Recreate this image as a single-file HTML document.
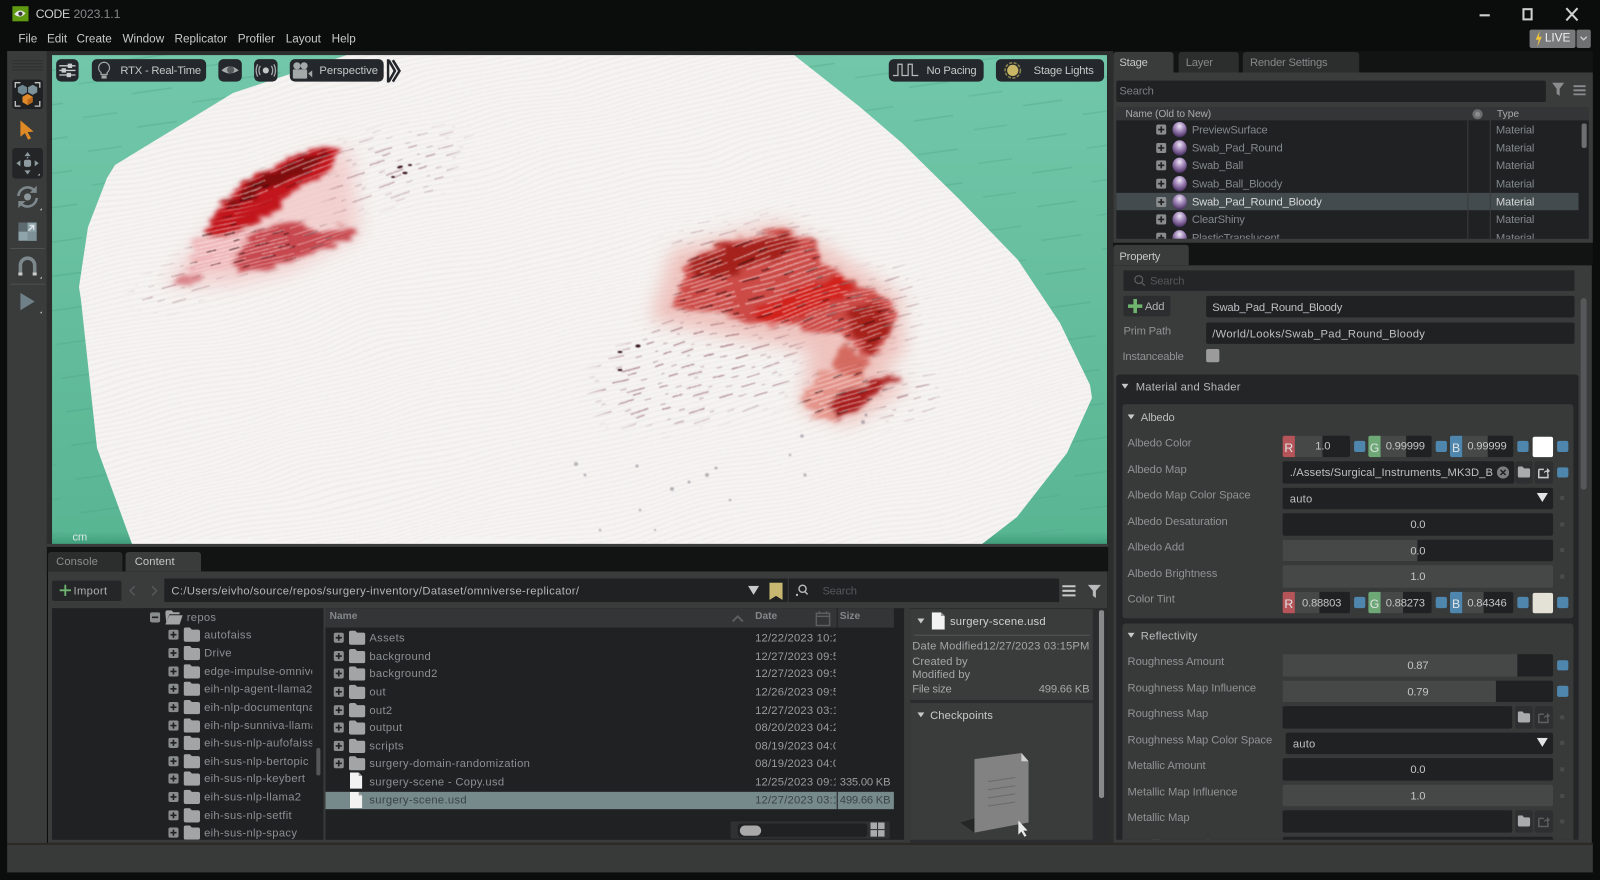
<!DOCTYPE html>
<html><head><meta charset="utf-8"><title>CODE 2023.1.1</title>
<style>
html,body{margin:0;padding:0;width:1600px;height:880px;overflow:hidden;background:#0b0c0c}
#v{position:absolute;left:0;top:0;z-index:0}
#u{position:absolute;left:0;top:0;width:1568px;height:862px;overflow:hidden;transform:scale(1.0204);transform-origin:0 0;z-index:1;filter:blur(.3px);font-family:"Liberation Sans",sans-serif}
#u div,#u svg{position:absolute}
.p{background:#3a3b3b}
.s{background:#2c2d2d}
.d{background:#1f2123}
.k{background:#121313}
.t{position:absolute;white-space:nowrap;font-size:11px;line-height:14px;letter-spacing:-.2px;color:#8f9394;transform:translateY(.6px)}
.m{color:#c8cbcb;top:31px;font-size:11.5px;letter-spacing:0}
.b{background:#24282c;border-radius:5px;top:58px;height:22px}
.w{color:#c4c8c8;top:62px}
.l{left:1105px;color:#8f9394;letter-spacing:-.08px}
.c{background:#4f86ad;width:11px;height:10.5px;border-radius:2px}
.o{background:#4a4b4b;width:4px;height:4px;left:1529px}
.f{background:#1f2123;border-radius:2px;left:1257px;width:265px;height:21.5px}
.g{background:#464747}
.v{text-align:center;color:#c4c6c6;left:1257px;width:265px}
.x{height:21.5px;border-radius:2px 0 0 2px;width:12px;color:#dfe3e3;text-align:center;font-size:12px;line-height:24px}
.n{color:#8b9091;letter-spacing:.3px}
.a{color:#9a9c9d;left:740px;width:79px;overflow:hidden;letter-spacing:.2px}
.y{color:#9a9c9d;left:823px}
.e{color:#83898b;left:1168px}
.i{color:#83898b;left:1466px}
.q{background:#2d2f30;border-radius:2px;width:17px;height:21.5px}
.tri{background:#c8caca;clip-path:polygon(0 0,100% 0,50% 100%)}
</style></head><body>

<svg id="v" width="1600" height="880" viewBox="0 0 1600 880">
<defs>
<clipPath id="vc"><rect x="52" y="55" width="1055" height="489"/></clipPath>
<clipPath id="gz"><polygon points="347,55 794,55 860,107 902,143 960,200 1018,260 1060,323 1090,385 1092,398 1067,453 1017,517 982,544 132,544 97,448 81,300 79,287 88,227 107,178 115,165 233,93"/></clipPath>
<pattern id="fib" width="200" height="4.6" patternUnits="userSpaceOnUse" patternTransform="rotate(-13)">
<line x1="0" y1="2" x2="200" y2="2" stroke="#e2dedb" stroke-width=".9"/></pattern>
<pattern id="tl" width="110" height="34" patternUnits="userSpaceOnUse" patternTransform="rotate(-8)">
<line x1="8" y1="9" x2="48" y2="9" stroke="#4fa688" stroke-width="1.6" opacity=".45"/>
<line x1="66" y1="26" x2="100" y2="26" stroke="#4fa688" stroke-width="1.4" opacity=".4"/></pattern>
<pattern id="stk" width="173" height="23" patternUnits="userSpaceOnUse" patternTransform="rotate(-16)">
<path d="M3 2.300h9M80 2.300h15M150 2.300h8M58 6.900h12M135 6.900h15M30 11.500h15M110 11.500h18M90 16.100h14M15 16.100h10M35 20.700h15M145 20.700h17" stroke="#7a3c4c" stroke-width="1.100" fill="none"/>
<path d="M40 2.300h4M120 2.300h4M20 6.900h6M100 6.900h4M8 11.500h3M75 11.500h8M160 11.500h6M50 16.100h4M140 16.100h6M2 20.700h5M66 20.700h6M115 20.700h6" stroke="#8a5c68" stroke-width="1" fill="none" opacity=".8"/></pattern>
<pattern id="wsk" width="211" height="21" patternUnits="userSpaceOnUse" patternTransform="rotate(-17)">
<path d="M0 2.100h70M90 2.100h70M175 2.100h30M20 6.300h55M95 6.300h90M0 10.500h34M48 10.500h60M130 10.500h75M10 14.700h80M105 14.700h40M160 14.700h45M30 18.900h65M110 18.900h90" stroke="#fff" stroke-width="1.100" fill="none"/></pattern>
<pattern id="dsk" width="137" height="16.800" patternUnits="userSpaceOnUse" patternTransform="rotate(-18)">
<path d="M5 2.100h10M60 2.100h6M30 6.300h14M100 6.300h8M12 10.500h6M80 10.500h16M50 14.700h12M120 14.700h10" stroke="#2e0a0e" stroke-width="1.300" fill="none"/></pattern>
<linearGradient id="tg" x1="0" y1="0" x2="0" y2="1"><stop offset="0" stop-color="#72c7aa"/><stop offset="1" stop-color="#58b592"/></linearGradient>
<linearGradient id="bt" x1="0" y1="0" x2="0" y2="1"><stop offset="0" stop-color="#2f8f6a" stop-opacity="0"/><stop offset="1" stop-color="#2f8f6a" stop-opacity=".6"/></linearGradient>
<filter id="wav" x="0" y="0" width="100%" height="100%"><feTurbulence type="fractalNoise" baseFrequency=".006 .012" numOctaves="2" seed="4" result="n"/><feDisplacementMap in="SourceGraphic" in2="n" scale="26" xChannelSelector="R" yChannelSelector="G"/><feGaussianBlur stdDeviation=".5"/></filter>
<filter id="fe" x="-20%" y="-20%" width="140%" height="140%"><feTurbulence type="fractalNoise" baseFrequency=".03 .18" numOctaves="2" seed="3" result="n"/><feDisplacementMap in="SourceGraphic" in2="n" scale="16" xChannelSelector="R" yChannelSelector="G"/><feGaussianBlur stdDeviation="2"/></filter>
<filter id="b8" x="-30%" y="-30%" width="160%" height="160%"><feGaussianBlur stdDeviation="9"/></filter>
<filter id="b5" x="-30%" y="-30%" width="160%" height="160%"><feGaussianBlur stdDeviation="5"/></filter>
<filter id="b1"><feGaussianBlur stdDeviation=".5"/></filter>
<mask id="m1" maskUnits="userSpaceOnUse" x="52" y="55" width="1055" height="489">
<g fill="#fff" filter="url(#b5)">
<polygon points="687,263 703,250 743,237 780,230 813,240 820,257 847,280 887,297 897,313 887,340 870,360 837,333 800,327 753,323 710,313 673,307"/>
<polygon points="800,400 820,373 853,367 900,380 873,400 837,423 810,413"/>
<polygon points="220,210 237,190 267,170 300,153 340,147 330,170 297,183 260,200 230,217"/>
<polygon points="233,260 250,233 290,223 350,232 317,250 267,267 240,273"/>
<polygon points="195,235 235,215 260,240 235,265 190,275"/>
</g></mask>
<mask id="m2" maskUnits="userSpaceOnUse" x="52" y="55" width="1055" height="489">
<g fill="#fff" filter="url(#b8)">
<polygon points="590,375 680,310 800,335 790,395 680,425 600,420" opacity=".9"/>
<polygon points="660,240 700,225 800,215 845,250 800,235 700,260" opacity=".6"/>
<polygon points="880,380 940,375 930,410 880,425" opacity=".8"/>
<polygon points="850,275 900,265 925,300 905,350 880,340" opacity=".6"/>
<polygon points="130,295 210,240 220,290 150,310" opacity=".7"/>
<polygon points="340,140 470,130 440,190 330,215" opacity=".7"/>
</g></mask>
</defs>
<g clip-path="url(#vc)">
<rect x="52" y="55" width="1055" height="489" fill="url(#tg)"/>
<rect x="52" y="55" width="1055" height="489" fill="url(#tl)"/>
<rect x="52" y="532" width="1055" height="12" fill="url(#bt)"/>
<polygon points="347,55 794,55 860,107 902,143 960,200 1018,260 1060,323 1090,385 1092,398 1067,453 1017,517 982,544 132,544 97,448 81,300 79,287 88,227 107,178 115,165 233,93" fill="#f6f4f2"/>
<g clip-path="url(#gz)">
<g opacity=".55"><rect x="52" y="55" width="1055" height="489" fill="url(#fib)" filter="url(#wav)"/></g>

<!-- pale halos -->
<g filter="url(#b8)">
<polygon points="165,285 220,215 300,160 350,148 360,235 290,272 230,285" fill="#f0b4b4" opacity=".55"/>
<polygon points="650,320 672,250 780,222 830,250 900,295 905,350 880,375 910,385 850,425 800,410 810,350 750,340" fill="#eba39c" opacity=".6"/>
</g>
<g mask="url(#m2)" opacity=".7"><rect x="52" y="55" width="1055" height="489" fill="url(#stk)" filter="url(#wav)"/></g>

<!-- stains with feathered edges -->
<g filter="url(#fe)">
<polygon points="195,238 235,218 260,240 235,265 190,275" fill="#efb4b6" opacity=".85"/>
<polygon points="233,260 250,233 290,223 360,232 317,252 267,270 240,275" fill="#c74a50"/>
<polygon points="170,282 188,274 205,275 192,284" fill="#d9858a"/>
<polygon points="205,232 220,207 237,190 267,170 300,153 340,147 330,170 297,190 270,215 230,235" fill="#c2191f"/>
<polygon points="225,207 245,190 275,170 305,158 330,152 318,166 290,178 260,192 235,208" fill="#7f0b10"/>
<polygon points="687,263 703,250 743,237 780,230 813,240 820,257 847,280 887,297 897,313 887,340 870,360 837,333 800,327 753,323 710,313 673,307" fill="#cc4c46"/>
<polygon points="800,400 820,373 853,367 870,385 837,423 810,413" fill="#e4948a"/>
<polygon points="845,345 870,362 855,380 830,365" fill="#d46a60"/>
<polygon points="688,262 715,250 750,240 785,232 800,245 770,262 730,275 695,280" fill="#a5211f"/>
<polygon points="745,315 790,290 840,275 855,288 820,310 775,325" fill="#d2201c"/>
<polygon points="845,310 880,300 892,330 870,355 853,335" fill="#a8241f"/>
<polygon points="828,405 850,386 900,378 872,398 840,420" fill="#a81c1c"/>
</g>
<g mask="url(#m1)" opacity=".7"><rect x="52" y="55" width="1055" height="489" fill="url(#dsk)" filter="url(#wav)"/></g>
<g mask="url(#m1)" opacity=".5"><rect x="52" y="55" width="1055" height="489" fill="url(#wsk)" filter="url(#wav)"/></g>
<!-- speckles -->
<g fill="#3d1a22" filter="url(#b1)">
<ellipse cx="400" cy="167" rx="3" ry="1.300" transform="rotate(-15 400 167)"/><ellipse cx="405" cy="173" rx="2.500" ry="1.200"/><ellipse cx="393" cy="177" rx="1.800" ry="1"/><ellipse cx="410" cy="165" rx="2" ry="1"/>
<ellipse cx="638" cy="346" rx="2.600" ry="1.600"/><ellipse cx="620" cy="352" rx="2.400" ry="1.100"/><ellipse cx="620" cy="370" rx="2.400" ry="1.100"/>
</g>
<g fill="#6c6a78" opacity=".45" filter="url(#b1)">
<circle cx="576" cy="464" r="2"/><circle cx="637" cy="466" r="1.600"/><circle cx="672" cy="489" r="2"/><circle cx="689" cy="482" r="1.500"/><circle cx="707" cy="475" r="2"/><circle cx="716" cy="468" r="1.500"/><circle cx="802" cy="436" r="1.800"/><circle cx="805" cy="475" r="1.600"/><circle cx="863" cy="422" r="2"/><circle cx="866" cy="415" r="1.500"/><circle cx="585" cy="475" r="1.500"/><circle cx="640" cy="510" r="1.300"/><circle cx="730" cy="500" r="1.300"/><circle cx="790" cy="455" r="1.300"/><circle cx="600" cy="530" r="1.300"/><circle cx="655" cy="530" r="1.100"/>
</g>
</g>
</g>
</svg>

<svg width="0" height="0" style="position:absolute"><defs>
<symbol id="pl" viewBox="0 0 10 10"><rect width="10" height="10" rx="2" fill="#8a8d8e"/><path d="M5 2v6M2 5h6" stroke="#1f2123" stroke-width="1.6"/></symbol>
<symbol id="mi" viewBox="0 0 10 10"><rect width="10" height="10" rx="2" fill="#8a8d8e"/><path d="M2 5h6" stroke="#1f2123" stroke-width="1.6"/></symbol>
<symbol id="fo" viewBox="0 0 16 14"><path d="M0 2q0-2 2-2h4l2 2h6q2 0 2 2v8q0 2-2 2H2q-2 0-2-2z" fill="#a2a4a5"/></symbol>
<symbol id="fg" viewBox="0 0 12 11"><path d="M0 2q0-2 1.500-2h3l1.500 2h4.500q1.500 0 1.500 1.500v6q0 1.500-1.500 1.500h-9q-1.500 0-1.500-1.500z" fill="#a9abac"/></symbol>
<symbol id="pg" viewBox="0 0 12 16"><path d="M0 0h8.500l3.500 3.500v12.500h-12z" fill="#f2f2f2"/><path d="M8.500 0l3.500 3.500h-3.500z" fill="#9a9a9a"/></symbol>
<symbol id="sh" viewBox="0 0 12 12"><path d="M1 3h5M1 3v8h9V7" fill="none" stroke="#c8caca" stroke-width="1.500"/><path d="M6 7q0-3 3-3V1.500l3 3-3 3V5.500q-2 0-3 1.500z" fill="#c8caca"/></symbol>
<symbol id="sd" viewBox="0 0 12 12"><path d="M1 3h5M1 3v8h9V7" fill="none" stroke="#5c5e5f" stroke-width="1.500"/><path d="M6 7q0-3 3-3V1.500l3 3-3 3V5.500q-2 0-3 1.500z" fill="#5c5e5f"/></symbol>
<radialGradient id="sg" cx=".5" cy=".28" r=".72"><stop offset="0" stop-color="#efe9f4"/><stop offset=".42" stop-color="#a98fc0"/><stop offset="1" stop-color="#452c5e"/></radialGradient>
<symbol id="ball" viewBox="0 0 16 16"><ellipse cx="8" cy="8" rx="7" ry="7.500" fill="url(#sg)"/></symbol>
</defs></svg>

<div id="u">
<!-- title bar -->
<svg style="left:12px;top:6px" width="16" height="15" viewBox="0 0 16 15"><rect width="16" height="15" fill="#5f9a10"/><path d="M2 8q5-7 11-1-5 6-11 1z" fill="#e8e8e8"/><circle cx="8" cy="7.500" r="2" fill="#3a3a3a"/></svg>
<span class="t" style="left:35px;top:6px;color:#cdd0d0;font-size:12px;letter-spacing:-.3px">CODE</span>
<span class="t" style="left:72px;top:6px;color:#85888a;font-size:12px;letter-spacing:-.1px">2023.1.1</span>
<span class="t m" style="left:18px">File</span>
<span class="t m" style="left:46px">Edit</span>
<span class="t m" style="left:75px">Create</span>
<span class="t m" style="left:120px">Window</span>
<span class="t m" style="left:171px">Replicator</span>
<span class="t m" style="left:233px">Profiler</span>
<span class="t m" style="left:280px">Layout</span>
<span class="t m" style="left:325px">Help</span>
<svg style="left:1445px;top:5px" width="110" height="18" viewBox="0 0 110 18" fill="none" stroke="#cfd1d1" stroke-width="2"><path d="M5 10h10"/><rect x="48" y="4" width="8" height="10"/><path d="M90 3l11 12M101 3l-11 12"/></svg>
<div style="left:1499px;top:29px;width:45px;height:18px;background:#797a7b;border-radius:2px"></div>
<svg style="left:1504px;top:30px" width="8" height="16" viewBox="0 0 8 16"><path d="M5 0L1 9h3l-1.500 7L7 6H4z" fill="#f0c53a"/></svg>
<span class="t" style="left:1514px;top:30px;color:#eee;font-size:11.5px;letter-spacing:0">LIVE</span>
<div style="left:1545px;top:29px;width:14px;height:18px;background:#6e6f70;border-radius:2px"></div>
<svg style="left:1548px;top:35px" width="8" height="6" viewBox="0 0 8 6"><path d="M1 1l3 3 3-3" fill="none" stroke="#d0d0d0" stroke-width="1.300"/></svg>

<!-- frames -->
<div class="p" style="left:7px;top:50px;width:39px;height:777px"></div>
<div class="s" style="left:46px;top:50px;width:5px;height:487px"></div>
<div class="s" style="left:46px;top:50px;width:1045px;height:4px"></div>
<div class="s" style="left:1085px;top:50px;width:6px;height:777px"></div>
<div class="p" style="left:46px;top:533px;width:1040px;height:3px"></div>
<div class="k" style="left:46px;top:536px;width:1040px;height:24px"></div>
<div class="s" style="left:47px;top:541px;width:73px;height:19px;border-radius:3px 3px 0 0"></div>
<div class="p" style="left:123px;top:541px;width:74px;height:19px;border-radius:3px 3px 0 0"></div>
<span class="t" style="left:55px;top:543px;color:#8a8e8f;font-size:11px;letter-spacing:.1px">Console</span>
<span class="t" style="left:132px;top:543px;color:#c4c8c8;font-size:11px;letter-spacing:.1px">Content</span>
<div class="p" style="left:47px;top:560px;width:1038px;height:266px"></div>
<div style="left:7px;top:826px;width:1554px;height:2px;background:#2f2a26"></div>
<div style="left:7px;top:828px;width:1554px;height:27px;background:#383939"></div>

<!-- left toolbar -->
<svg style="left:12px;top:58px" width="30" height="12" viewBox="0 0 30 12" stroke="#2e2f2f" stroke-width="1"><path d="M0 1.500h30M0 4.500h30M0 7.500h30M0 10.500h30"/></svg>
<div class="d" style="left:12px;top:78px;width:30px;height:29px;border-radius:3px"></div>
<svg style="left:12px;top:78px" width="30" height="29" viewBox="0 0 30 29"><path d="M3 8V3h5M22 3h5v5M3 21v5h5M22 26h5v-5" fill="none" stroke="#c4c6c6" stroke-width="1.300"/><path d="M10 5l4.500 2.500v5L10 15l-4.500-2.500v-5z" fill="#6f8590"/><path d="M20 5l4.500 2.500v5L20 15l-4.500-2.500v-5z" fill="#7e929c"/><path d="M15 14l5 2.800v5.400L15 25l-5-2.800v-5.400z" fill="#e08a2a"/><path d="M15 19.600l5-2.800v5.400L15 25z" fill="#b9681a"/></svg>
<svg style="left:19px;top:117px" width="16" height="20" viewBox="0 0 16 20"><path d="M1 1l13 11-6 .5 3.500 6-3 1.500-3-6.500L1 17z" fill="#e08a25"/></svg>
<div style="left:12px;top:145px;width:30px;height:30px;border-radius:3px;background:#232526"></div>
<svg style="left:12px;top:145px" width="30" height="30" viewBox="0 0 30 30" fill="#8e9ba0"><rect x="11.500" y="11.500" width="7" height="7" rx="2"/><path d="M15 4l3 4h-6zM15 26l3-4h-6zM4 15l4-3v6zM26 15l-4-3v6z"/><circle cx="15" cy="9.500" r=".8"/><path d="M25 27h2v-2l-2 2z" fill="#ccc"/></svg>
<svg style="left:12px;top:178px" width="30" height="30" viewBox="0 0 30 30"><path d="M6 14a9 9 0 0 1 16-5M24 16a9 9 0 0 1-16 5" fill="none" stroke="#7d888c" stroke-width="2.500"/><path d="M24 4v7h-7zM6 26v-7h7z" fill="#7d888c"/><circle cx="15" cy="15" r="3.500" fill="#8c969a"/><path d="M27 28h2v-2z" fill="#ccc"/></svg>
<svg style="left:18px;top:218px" width="18" height="18" viewBox="0 0 18 18"><rect width="18" height="18" fill="#8ea3aa"/><rect width="9" height="9" fill="#5d6a6f"/><rect x="9" y="9" width="9" height="9" fill="#7e9198"/><path d="M10 8l5-5M11 3h4v4" stroke="#e0e6e8" stroke-width="1.400" fill="none"/></svg>
<div style="left:10px;top:243px;width:34px;height:1px;background:#505151"></div>
<svg style="left:12px;top:250px" width="30" height="24" viewBox="0 0 30 24"><path d="M8 17v-7a7 7 0 0 1 14 0v7" fill="none" stroke="#7d888c" stroke-width="3.500"/><path d="M6 17h4v3H6zM20 17h4v3h-4z" fill="#c8cccd"/><path d="M27 23h2v-2z" fill="#ccc"/></svg>
<div style="left:10px;top:278px;width:34px;height:1px;background:#505151"></div>
<svg style="left:12px;top:286px" width="30" height="22" viewBox="0 0 30 22"><path d="M8 1l14 8.500L8 18z" fill="#6f8088"/><path d="M27 21h2v-2z" fill="#ccc"/></svg>

<!-- viewport buttons -->
<div class="b" style="left:55px;width:22px"></div>
<svg style="left:58px;top:62px" width="16" height="14" viewBox="0 0 16 14" stroke="#c9cdcd" stroke-width="1.300" fill="#c9cdcd"><path d="M0 2.500h16M0 7h16M0 11.500h16"/><rect x="9" y="1" width="3" height="3"/><rect x="3" y="5.500" width="3" height="3"/><rect x="8" y="10" width="3" height="3"/></svg>
<div class="b" style="left:90px;width:112px"></div>
<svg style="left:95px;top:60px" width="14" height="18" viewBox="0 0 14 18"><path d="M7 1a5.500 5.500 0 0 0-3 10v2h6v-2a5.500 5.500 0 0 0-3-10z" fill="none" stroke="#a3a8a9" stroke-width="1.200"/><rect x="4.500" y="14" width="5" height="3" fill="#a3a8a9"/></svg>
<span class="t w" style="left:118px">RTX - Real-Time</span>
<div class="b" style="left:214px;width:23px"></div>
<svg style="left:216px;top:62px" width="19" height="14" viewBox="0 0 19 14"><path d="M1 7q8-8 17 0-9 6-17 0z" fill="#a3a8a9"/><circle cx="10" cy="6.500" r="3.500" fill="#565a5c"/></svg>
<div class="b" style="left:249px;width:23px"></div>
<svg style="left:250px;top:62px" width="21" height="14" viewBox="0 0 21 14" fill="none" stroke="#a3a8a9" stroke-width="1.300"><circle cx="10.500" cy="7" r="3" fill="#c2c6c6" stroke="none"/><path d="M5 2.500q-2.500 4.500 0 9M16 2.500q2.500 4.500 0 9M2.500 1q-3 6 0 12M18.500 1q3 6 0 12"/></svg>
<div class="b" style="left:284px;width:92px"></div>
<svg style="left:286px;top:60px" width="21" height="18" viewBox="0 0 21 18" fill="#a3a8a9"><circle cx="5" cy="4.500" r="3.500"/><circle cx="12" cy="4.500" r="3.500"/><rect x="1" y="8" width="14" height="9" rx="1"/><path d="M16 12l4-3v7z"/></svg>
<span class="t w" style="left:313px;letter-spacing:0">Perspective</span>
<svg style="left:379px;top:58px" width="15" height="23" viewBox="0 0 15 23"><rect width="2.500" height="23" fill="#23272b"/><path d="M2 1l6 10.500-6 10.500M6 1l6.500 10.500-6.500 10.500" fill="none" stroke="#23272b" stroke-width="2.500"/></svg>
<div class="b" style="left:871px;width:93px"></div>
<svg style="left:875px;top:62px" width="26" height="13" viewBox="0 0 26 13" fill="none" stroke="#b8bcbc" stroke-width="1.200"><path d="M0 12h5V1h4v11h6V1h4v11h6"/></svg>
<span class="t w" style="left:908px">No Pacing</span>
<div class="b" style="left:976px;width:106px"></div>
<svg style="left:984px;top:60px" width="17" height="18" viewBox="0 0 17 18"><circle cx="8.500" cy="9" r="5.500" fill="#c9b765"/><circle cx="8.500" cy="9" r="7.500" fill="none" stroke="#8b8450" stroke-width="1.500" stroke-dasharray="3 1.500"/></svg>
<span class="t w" style="left:1013px">Stage Lights</span>
<span class="t" style="left:71px;top:519px;color:#d8e8e2;font-size:11px">cm</span>

<!-- content bar -->
<div style="left:51px;top:568.500px;width:68px;height:20.500px;background:#242628;border-radius:2px"></div>
<svg style="left:58px;top:572px" width="12" height="13" viewBox="0 0 12 13"><path d="M6 1v11M0.500 6.500h11" stroke="#6fb56f" stroke-width="1.800"/></svg>
<span class="t" style="left:72px;top:572px;color:#adb0b1;letter-spacing:.35px">Import</span>
<svg style="left:126px;top:573px" width="30" height="12" viewBox="0 0 30 12" fill="none" stroke="#55585a" stroke-width="1.500"><path d="M6 1.500L1.500 6 6 10.500M23 1.500L27.500 6 23 10.500"/></svg>
<div class="d" style="left:161px;top:566.500px;width:611px;height:23.500px"></div>
<span class="t" style="left:168px;top:572px;color:#b5b8b9;letter-spacing:.35px">C:/Users/eivho/source/repos/surgery-inventory/Dataset/omniverse-replicator/</span>
<div class="tri" style="left:733px;top:574px;width:11px;height:9px"></div>
<svg style="left:754px;top:570.500px" width="13" height="17" viewBox="0 0 13 17"><path d="M0 0h13v17l-6.500-4L0 17z" fill="#c8b770"/></svg>
<div class="d" style="left:773px;top:566.500px;width:264.500px;height:23.500px"></div>
<svg style="left:780px;top:572px" width="12" height="13" viewBox="0 0 12 13"><circle cx="6.500" cy="5" r="3.500" fill="none" stroke="#b8bbbc" stroke-width="1.400"/><path d="M9 8l2.500 2.500" stroke="#b8bbbc" stroke-width="1.400"/><rect x="0" y="10" width="2" height="2" fill="#b8bbbc"/></svg>
<span class="t" style="left:806px;top:572px;color:#55585a">Search</span>
<svg style="left:1041px;top:573px" width="13" height="12" viewBox="0 0 13 12" stroke="#c8caca" stroke-width="2"><path d="M0 1.500h13M0 6h13M0 10.500h13"/></svg>
<svg style="left:1066px;top:573px" width="13" height="13" viewBox="0 0 13 13"><path d="M0 0h13L8 6v7L5 11V6z" fill="#b8bbbc"/></svg>

<!-- folder tree -->
<div class="d" style="left:51px;top:596px;width:266px;height:227px"></div>
<div style="left:51px;top:596px;width:255px;height:227px;overflow:hidden">
<svg style="left:96px;top:4px" width="10" height="10"><use href="#mi"/></svg>
<svg style="left:111px;top:2px" width="17" height="14" viewBox="0 0 17 14"><path d="M0 3q0-3 2-3h4l2 2h6v2H4L1 12z" fill="#a2a4a5"/><path d="M4 5h13l-3 9H0z" fill="#a2a4a5"/></svg>
<span class="t n" style="left:132px;top:2px">repos</span>
<svg style="left:114px;top:21px" width="10" height="10"><use href="#pl"/></svg><svg style="left:129px;top:19px" width="16" height="14"><use href="#fo"/></svg><span class="t n" style="left:149px;top:19px">autofaiss</span>
<svg style="left:114px;top:39px" width="10" height="10"><use href="#pl"/></svg><svg style="left:129px;top:37px" width="16" height="14"><use href="#fo"/></svg><span class="t n" style="left:149px;top:37px">Drive</span>
<svg style="left:114px;top:57px" width="10" height="10"><use href="#pl"/></svg><svg style="left:129px;top:55px" width="16" height="14"><use href="#fo"/></svg><span class="t n" style="left:149px;top:55px">edge-impulse-omniverse</span>
<svg style="left:114px;top:74px" width="10" height="10"><use href="#pl"/></svg><svg style="left:129px;top:72px" width="16" height="14"><use href="#fo"/></svg><span class="t n" style="left:149px;top:72px">eih-nlp-agent-llama2</span>
<svg style="left:114px;top:92px" width="10" height="10"><use href="#pl"/></svg><svg style="left:129px;top:90px" width="16" height="14"><use href="#fo"/></svg><span class="t n" style="left:149px;top:90px">eih-nlp-documentqna</span>
<svg style="left:114px;top:110px" width="10" height="10"><use href="#pl"/></svg><svg style="left:129px;top:108px" width="16" height="14"><use href="#fo"/></svg><span class="t n" style="left:149px;top:108px">eih-nlp-sunniva-llama2</span>
<svg style="left:114px;top:127px" width="10" height="10"><use href="#pl"/></svg><svg style="left:129px;top:125px" width="16" height="14"><use href="#fo"/></svg><span class="t n" style="left:149px;top:125px">eih-sus-nlp-aufofaiss</span>
<svg style="left:114px;top:145px" width="10" height="10"><use href="#pl"/></svg><svg style="left:129px;top:143px" width="16" height="14"><use href="#fo"/></svg><span class="t n" style="left:149px;top:143px">eih-sus-nlp-bertopic</span>
<svg style="left:114px;top:162px" width="10" height="10"><use href="#pl"/></svg><svg style="left:129px;top:160px" width="16" height="14"><use href="#fo"/></svg><span class="t n" style="left:149px;top:160px">eih-sus-nlp-keybert</span>
<svg style="left:114px;top:180px" width="10" height="10"><use href="#pl"/></svg><svg style="left:129px;top:178px" width="16" height="14"><use href="#fo"/></svg><span class="t n" style="left:149px;top:178px">eih-sus-nlp-llama2</span>
<svg style="left:114px;top:198px" width="10" height="10"><use href="#pl"/></svg><svg style="left:129px;top:196px" width="16" height="14"><use href="#fo"/></svg><span class="t n" style="left:149px;top:196px">eih-sus-nlp-setfit</span>
<svg style="left:114px;top:215px" width="10" height="10"><use href="#pl"/></svg><svg style="left:129px;top:213px" width="16" height="14"><use href="#fo"/></svg><span class="t n" style="left:149px;top:213px">eih-sus-nlp-spacy</span>
</div>
<div style="left:310px;top:733px;width:4px;height:27px;background:#555758;border-radius:2px"></div>

<!-- file list -->
<div class="d" style="left:319px;top:596px;width:567px;height:227px"></div>
<div style="left:319px;top:596px;width:557px;height:19px;background:#333536"></div>
<span class="t" style="left:323px;top:597px;color:#84888a;font-size:10px;font-weight:bold;letter-spacing:0">Name</span>
<svg style="left:717px;top:602px" width="12" height="8" viewBox="0 0 12 8"><path d="M1 7l5-5 5 5" fill="none" stroke="#5d6061" stroke-width="1.800"/></svg>
<span class="t" style="left:740px;top:597px;color:#84888a;font-size:10px;font-weight:bold;letter-spacing:0">Date</span>
<svg style="left:799px;top:598px" width="16" height="16" viewBox="0 0 16 16" fill="none" stroke="#5d6061" stroke-width="1.400"><rect x="1" y="3" width="13" height="12"/><path d="M1 6h13M4 1v3M11 1v3"/></svg>
<div style="left:820px;top:596px;width:1px;height:19px;background:#1f2123"></div>
<span class="t" style="left:823px;top:597px;color:#84888a;font-size:10px;font-weight:bold;letter-spacing:0">Size</span>
<div style="left:319px;top:775.800px;width:557px;height:17.500px;background:#76898b"></div>
<div style="left:820px;top:775.800px;width:1px;height:17.500px;background:#1f2123"></div>

<svg style="left:327px;top:620px" width="10" height="10"><use href="#pl"/></svg><svg style="left:342px;top:618px" width="16" height="14"><use href="#fo"/></svg><span class="t n" style="left:362px;top:618px">Assets</span><span class="t a" style="top:618px">12/22/2023 10:23AM</span>
<svg style="left:327px;top:638px" width="10" height="10"><use href="#pl"/></svg><svg style="left:342px;top:636px" width="16" height="14"><use href="#fo"/></svg><span class="t n" style="left:362px;top:636px">background</span><span class="t a" style="top:636px">12/27/2023 09:51AM</span>
<svg style="left:327px;top:655px" width="10" height="10"><use href="#pl"/></svg><svg style="left:342px;top:653px" width="16" height="14"><use href="#fo"/></svg><span class="t n" style="left:362px;top:653px">background2</span><span class="t a" style="top:653px">12/27/2023 09:51AM</span>
<svg style="left:327px;top:673px" width="10" height="10"><use href="#pl"/></svg><svg style="left:342px;top:671px" width="16" height="14"><use href="#fo"/></svg><span class="t n" style="left:362px;top:671px">out</span><span class="t a" style="top:671px">12/26/2023 09:51AM</span>
<svg style="left:327px;top:691px" width="10" height="10"><use href="#pl"/></svg><svg style="left:342px;top:689px" width="16" height="14"><use href="#fo"/></svg><span class="t n" style="left:362px;top:689px">out2</span><span class="t a" style="top:689px">12/27/2023 03:15PM</span>
<svg style="left:327px;top:708px" width="10" height="10"><use href="#pl"/></svg><svg style="left:342px;top:706px" width="16" height="14"><use href="#fo"/></svg><span class="t n" style="left:362px;top:706px">output</span><span class="t a" style="top:706px">08/20/2023 04:22PM</span>
<svg style="left:327px;top:726px" width="10" height="10"><use href="#pl"/></svg><svg style="left:342px;top:724px" width="16" height="14"><use href="#fo"/></svg><span class="t n" style="left:362px;top:724px">scripts</span><span class="t a" style="top:724px">08/19/2023 04:05PM</span>
<svg style="left:327px;top:743px" width="10" height="10"><use href="#pl"/></svg><svg style="left:342px;top:741px" width="16" height="14"><use href="#fo"/></svg><span class="t n" style="left:362px;top:741px">surgery-domain-randomization</span><span class="t a" style="top:741px">08/19/2023 04:05PM</span>
<svg style="left:343px;top:757px" width="12" height="16"><use href="#pg"/></svg><span class="t n" style="left:362px;top:759px">surgery-scene - Copy.usd</span><span class="t a" style="top:759px">12/25/2023 09:15PM</span><span class="t y" style="top:759px">335.00 KB</span>
<svg style="left:343px;top:776px" width="12" height="16"><use href="#pg"/></svg><span class="t n" style="left:362px;top:777px;color:#3a4446">surgery-scene.usd</span><span class="t a" style="top:777px;color:#3a4446">12/27/2023 03:15PM</span><span class="t y" style="top:777px;color:#3a4446">499.66 KB</span>

<div style="left:715.500px;top:804.600px;width:156.500px;height:17.500px;background:#2f3132;border-radius:2px"></div>
<div class="d" style="left:723px;top:807px;width:127px;height:13px;border-radius:3px"></div>
<div style="left:725px;top:808.500px;width:21px;height:10px;background:#a9a9a9;border-radius:5px"></div>
<svg style="left:853px;top:806px" width="14" height="14" viewBox="0 0 14 14" fill="#a9abac"><rect width="6.500" height="6.500"/><rect x="7.500" width="6.500" height="6.500"/><rect y="7.500" width="6.500" height="6.500"/><rect x="7.500" y="7.500" width="6.500" height="6.500"/></svg>

<!-- info panel -->
<div style="left:886px;top:596px;width:199px;height:230px;background:#2b2c2d"></div>
<div style="left:886px;top:596px;width:6px;height:230px;background:#383939"></div>
<div class="p" style="left:892px;top:597px;width:179px;height:89px"></div>
<div class="p" style="left:892px;top:689px;width:179px;height:134px"></div>
<div class="tri" style="left:899px;top:606px;width:7px;height:5px"></div>
<svg style="left:912.500px;top:600px" width="13" height="17"><use href="#pg"/></svg>
<span class="t" style="left:931px;top:601.500px;color:#d0d2d2;letter-spacing:.2px">surgery-scene.usd</span>
<div style="left:896px;top:622px;width:172px;height:1px;background:#555657"></div>
<span class="t" style="left:894px;top:626px;color:#a4a7a8;letter-spacing:.12px">Date Modified12/27/2023 03:15PM</span>
<span class="t" style="left:894px;top:640.500px;color:#a4a7a8;letter-spacing:.05px">Created by</span>
<span class="t" style="left:894px;top:654px;color:#a4a7a8;letter-spacing:.05px">Modified by</span>
<span class="t" style="left:894px;top:668px;color:#a4a7a8">File size</span>
<span class="t" style="left:1018px;top:668px;color:#a4a7a8">499.66 KB</span>
<div class="tri" style="left:899px;top:698px;width:7px;height:5px"></div>
<span class="t" style="left:911.500px;top:694px;color:#c8caca;letter-spacing:.1px">Checkpoints</span>
<svg style="left:935px;top:732px" width="80" height="90" viewBox="0 0 80 90"><path d="M6 74l14 10V70z" fill="#252626"/><path d="M20 12l46-6 7 8v60L20 84z" fill="#828282"/><path d="M66 6l7 8h-7z" fill="#d0d0d0"/><g stroke="#6a6a6a" stroke-width="1"><path d="M33 34l27-4M33 42l27-4M33 50l27-4M33 58l27-4"/></g><path d="M63 72v14l3-3 3 5 2-1-3-5h4z" fill="#eaeaea"/></svg>
<div style="left:1077px;top:598px;width:5px;height:184px;background:#88898a;border-radius:2px"></div>

<!-- stage -->
<div class="k" style="left:1091px;top:50px;width:470px;height:21px"></div>
<div class="p" style="left:1091px;top:51px;width:59px;height:20px;border-radius:3px 3px 0 0"></div>
<div class="s" style="left:1155px;top:51px;width:59px;height:20px;border-radius:3px 3px 0 0"></div>
<div class="s" style="left:1218px;top:51px;width:114px;height:20px;border-radius:3px 3px 0 0"></div>
<span class="t" style="left:1097px;top:54px;color:#c4c8c8">Stage</span>
<span class="t" style="left:1162px;top:54px;color:#85898a">Layer</span>
<span class="t" style="left:1225px;top:54px;color:#85898a">Render Settings</span>
<div class="p" style="left:1091px;top:71px;width:470px;height:167px"></div>
<div class="d" style="left:1093.500px;top:78.500px;width:421.500px;height:21px;border-radius:2px"></div>
<span class="t" style="left:1097px;top:82px;color:#7b7f80">Search</span>
<svg style="left:1521px;top:81px" width="12" height="13" viewBox="0 0 12 13"><path d="M0 0h12L7.500 6v7L4.500 11V6z" fill="#8a8d8e"/></svg>
<svg style="left:1542px;top:83px" width="12" height="11" viewBox="0 0 12 11" stroke="#8a8d8e" stroke-width="1.800"><path d="M0 1.500h12M0 5.500h12M0 9.500h12"/></svg>
<div class="s" style="left:1093.500px;top:105px;width:463.500px;height:13px;background:#333536"></div>
<span class="t" style="left:1103px;top:105px;color:#a9acad;font-size:10px;letter-spacing:-.1px">Name (Old to New)</span>
<svg style="left:1442px;top:107px" width="12" height="10" viewBox="0 0 12 10"><circle cx="6" cy="5" r="5" fill="#6b6e6f"/><circle cx="6" cy="5" r="2.500" fill="#8a8d8e"/></svg>
<span class="t" style="left:1467px;top:105px;color:#a9acad;font-size:10px;letter-spacing:0">Type</span>
<div class="d" style="left:1093.500px;top:118px;width:463.500px;height:116px"></div>
<div style="left:1093.500px;top:188.500px;width:453.500px;height:17.500px;background:#434b4e"></div>
<div style="left:1438px;top:118px;width:1px;height:116px;background:#3a3c3d"></div>
<div style="left:1459.500px;top:118px;width:1px;height:116px;background:#3a3c3d"></div>
<div style="left:1550px;top:120.500px;width:5px;height:24px;background:#6c6e6f;border-radius:2px"></div>
<div style="left:1093.500px;top:118px;width:460px;height:116px;overflow:hidden">
<svg style="left:39.500px;top:4px" width="10" height="10"><use href="#pl"/></svg><svg style="left:54px;top:1px" width="16" height="16"><use href="#ball"/></svg><span class="t e" style="left:74.500px;top:2px">PreviewSurface</span><span class="t i" style="left:372.500px;top:2px">Material</span>
<svg style="left:39.500px;top:22px" width="10" height="10"><use href="#pl"/></svg><svg style="left:54px;top:19px" width="16" height="16"><use href="#ball"/></svg><span class="t e" style="left:74.500px;top:19.500px">Swab_Pad_Round</span><span class="t i" style="left:372.500px;top:19.500px">Material</span>
<svg style="left:39.500px;top:39px" width="10" height="10"><use href="#pl"/></svg><svg style="left:54px;top:36px" width="16" height="16"><use href="#ball"/></svg><span class="t e" style="left:74.500px;top:37px">Swab_Ball</span><span class="t i" style="left:372.500px;top:37px">Material</span>
<svg style="left:39.500px;top:57px" width="10" height="10"><use href="#pl"/></svg><svg style="left:54px;top:54px" width="16" height="16"><use href="#ball"/></svg><span class="t e" style="left:74.500px;top:55px">Swab_Ball_Bloody</span><span class="t i" style="left:372.500px;top:55px">Material</span>
<svg style="left:39.500px;top:75px" width="10" height="10"><use href="#pl"/></svg><svg style="left:54px;top:72px" width="16" height="16"><use href="#ball"/></svg><span class="t e" style="left:74.500px;top:72.500px;color:#d5d8d8">Swab_Pad_Round_Bloody</span><span class="t i" style="left:372.500px;top:72.500px;color:#d5d8d8">Material</span>
<svg style="left:39.500px;top:92px" width="10" height="10"><use href="#pl"/></svg><svg style="left:54px;top:89px" width="16" height="16"><use href="#ball"/></svg><span class="t e" style="left:74.500px;top:90px">ClearShiny</span><span class="t i" style="left:372.500px;top:90px">Material</span>
<svg style="left:39.500px;top:110px" width="10" height="10"><use href="#pl"/></svg><svg style="left:54px;top:107px" width="16" height="16"><use href="#ball"/></svg><span class="t e" style="left:74.500px;top:107.500px">PlasticTranslucent</span><span class="t i" style="left:372.500px;top:107.500px">Material</span>
</div>

<!-- property -->
<div class="k" style="left:1091px;top:238px;width:470px;height:22px"></div>
<div class="p" style="left:1091px;top:240px;width:74px;height:20px;border-radius:3px 3px 0 0"></div>
<span class="t" style="left:1097px;top:243.500px;color:#c4c8c8">Property</span>
<div class="p" style="left:1091px;top:260px;width:469px;height:566px"></div>
<div class="d" style="left:1101px;top:265px;width:442px;height:20px;background:#232526"></div>
<svg style="left:1111px;top:269px" width="12" height="12" viewBox="0 0 12 12" fill="none" stroke="#5d6061" stroke-width="1.200"><circle cx="5" cy="5" r="3.800"/><path d="M8 8l3 3"/></svg>
<span class="t" style="left:1127px;top:268px;color:#55585a">Search</span>
<div style="left:1101px;top:290px;width:46px;height:20px;background:#2b2d2e;border-radius:2px"></div>
<svg style="left:1105px;top:293px" width="15" height="14" viewBox="0 0 15 14"><path d="M7.500 0v14M0.500 7h14" stroke="#6fb56f" stroke-width="3.500"/></svg>
<span class="t" style="left:1122px;top:293px;color:#b0b3b4">Add</span>
<div class="d" style="left:1182px;top:290px;width:361px;height:21px;border-radius:2px"></div>
<span class="t" style="left:1188px;top:294px;color:#bec1c2">Swab_Pad_Round_Bloody</span>
<span class="t" style="left:1101px;top:317px">Prim Path</span>
<div class="d" style="left:1182px;top:316px;width:361px;height:20.500px;border-radius:2px"></div>
<span class="t" style="left:1188px;top:319.500px;color:#bec1c2;letter-spacing:.3px">/World/Looks/Swab_Pad_Round_Bloody</span>
<span class="t" style="left:1100px;top:342px">Instanceable</span>
<div style="left:1182px;top:342px;width:13px;height:13px;background:#9b9b9b;border-radius:2px"></div>
<div style="left:1549px;top:292px;width:6px;height:188px;background:#555758;border-radius:3px"></div>

<div style="left:1094px;top:366.500px;width:453px;height:456.500px;background:#232526;border-radius:3px 3px 0 0"></div>
<div class="tri" style="left:1099px;top:376px;width:7px;height:5px"></div>
<span class="t" style="left:1113px;top:372px;color:#b9bcbc;letter-spacing:.2px">Material and Shader</span>
<div style="left:1100px;top:396px;width:442px;height:210px;background:#383a3a;border-radius:3px"></div>
<div style="left:1100px;top:611px;width:442px;height:212px;background:#383a3a;border-radius:3px 3px 0 0"></div>
<div class="tri" style="left:1105px;top:406px;width:7px;height:5px"></div>
<span class="t" style="left:1118px;top:402px;color:#b9bcbc">Albedo</span>

<!-- Albedo rows -->
<span class="t l" style="top:427px">Albedo Color</span>
<div class="f" style="top:426.500px;width:66px"></div><div class="g" style="left:1269px;top:426.500px;width:27px;height:21.500px"></div><div class="x" style="left:1257px;top:426.500px;background:#b5555a">R</div><span class="t" style="left:1289px;top:430px;color:#c4c6c6">1.0</span><div class="c" style="left:1327px;top:432px"></div>
<div class="f" style="left:1341px;top:426.500px;width:62px"></div><div class="g" style="left:1353px;top:426.500px;width:25px;height:21.500px"></div><div class="x" style="left:1341px;top:426.500px;background:#6ea876">G</div><span class="t" style="left:1358px;top:430px;color:#c4c6c6">0.99999</span><div class="c" style="left:1407px;top:432px"></div>
<div class="f" style="left:1421px;top:426.500px;width:62px"></div><div class="g" style="left:1433px;top:426.500px;width:25px;height:21.500px"></div><div class="x" style="left:1421px;top:426.500px;background:#4f86ad">B</div><span class="t" style="left:1438px;top:430px;color:#c4c6c6">0.99999</span><div class="c" style="left:1487px;top:432px"></div>
<div style="left:1502px;top:427.500px;width:20px;height:20px;background:#fff;border-radius:2px"></div><div class="c" style="left:1526px;top:432px"></div>

<span class="t l" style="top:452.500px">Albedo Map</span>
<div class="f" style="top:452px;width:227px"></div><span class="t" style="left:1264px;top:456px;color:#bec1c2;letter-spacing:.1px">./Assets/Surgical_Instruments_MK3D_B</span>
<svg style="left:1467px;top:457px" width="12" height="12" viewBox="0 0 12 12"><circle cx="6" cy="6" r="6" fill="#7c7e7f"/><path d="M3.500 3.500l5 5M8.500 3.500l-5 5" stroke="#1f2123" stroke-width="1.500"/></svg>
<div class="q" style="left:1485px;top:452px"></div><svg style="left:1487px;top:457px" width="13" height="11"><use href="#fg"/></svg>
<div class="q" style="left:1504px;top:452px;width:18px"></div><svg style="left:1507px;top:457px" width="12" height="12"><use href="#sh"/></svg>
<div class="c" style="left:1526px;top:457.500px"></div>

<span class="t l" style="top:478px">Albedo Map Color Space</span>
<div class="f" style="top:477.500px"></div><span class="t" style="left:1264px;top:481.500px;color:#bec1c2;letter-spacing:.2px">auto</span><div class="tri" style="left:1506px;top:483px;width:11px;height:9px;background:#e4e4e4"></div><div class="o" style="top:486px"></div>

<span class="t l" style="top:503.500px">Albedo Desaturation</span>
<div class="f" style="top:503px"></div><span class="t v" style="top:507px">0.0</span><div class="o" style="top:512px"></div>

<span class="t l" style="top:529px">Albedo Add</span>
<div class="f" style="top:528.500px"></div><div class="g" style="left:1257px;top:528.500px;width:132px;height:21.500px"></div><span class="t v" style="top:532.500px">0.0</span><div class="o" style="top:537px"></div>

<span class="t l" style="top:554.500px">Albedo Brightness</span>
<div class="f g" style="top:554px"></div><span class="t v" style="top:558px">1.0</span><div class="o" style="top:563px"></div>

<span class="t l" style="top:580px">Color Tint</span>
<div class="f" style="top:579.600px;width:66px"></div><div class="g" style="left:1269px;top:579.600px;width:24px;height:21.500px"></div><div class="x" style="left:1257px;top:579.600px;background:#b5555a">R</div><span class="t" style="left:1276px;top:583.500px;color:#c4c6c6">0.88803</span><div class="c" style="left:1327px;top:585px"></div>
<div class="f" style="left:1341px;top:579.600px;width:62px"></div><div class="g" style="left:1353px;top:579.600px;width:22px;height:21.500px"></div><div class="x" style="left:1341px;top:579.600px;background:#6ea876">G</div><span class="t" style="left:1358px;top:583.500px;color:#c4c6c6">0.88273</span><div class="c" style="left:1407px;top:585px"></div>
<div class="f" style="left:1421px;top:579.600px;width:62px"></div><div class="g" style="left:1433px;top:579.600px;width:21px;height:21.500px"></div><div class="x" style="left:1421px;top:579.600px;background:#4f86ad">B</div><span class="t" style="left:1438px;top:583.500px;color:#c4c6c6">0.84346</span><div class="c" style="left:1487px;top:585px"></div>
<div style="left:1502px;top:580.600px;width:20px;height:20px;background:#e4e2d6;border-radius:2px"></div><div class="c" style="left:1526px;top:585px"></div>

<div class="tri" style="left:1105px;top:620px;width:7px;height:5px"></div>
<span class="t" style="left:1118px;top:616px;color:#b9bcbc;letter-spacing:.2px">Reflectivity</span>

<span class="t l" style="top:641px">Roughness Amount</span>
<div class="f" style="top:641px"></div><div class="g" style="left:1257px;top:641px;width:230px;height:21.500px"></div><span class="t v" style="top:645px">0.87</span><div class="c" style="left:1526px;top:646.500px"></div>

<span class="t l" style="top:666.500px">Roughness Map Influence</span>
<div class="f" style="top:666.500px"></div><div class="g" style="left:1257px;top:666.500px;width:209px;height:21.500px"></div><span class="t v" style="top:670.500px">0.79</span><div class="c" style="left:1526px;top:672px"></div>

<span class="t l" style="top:692px">Roughness Map</span>
<div class="f" style="top:692px;width:225px"></div><div class="q" style="left:1485px;top:692px"></div><svg style="left:1487px;top:697px" width="13" height="11"><use href="#fg"/></svg><div class="q" style="left:1504px;top:692px;width:18px"></div><svg style="left:1507px;top:697px" width="12" height="12"><use href="#sd"/></svg><div class="o" style="top:701px"></div>

<span class="t l" style="top:717.500px">Roughness Map Color Space</span>
<div class="f" style="top:717.500px;left:1260px;width:262px"></div><span class="t" style="left:1267px;top:721.500px;color:#bec1c2;letter-spacing:.2px">auto</span><div class="tri" style="left:1506px;top:723px;width:11px;height:9px;background:#e4e4e4"></div><div class="o" style="top:726px"></div>

<span class="t l" style="top:743px">Metallic Amount</span>
<div class="f" style="top:743px"></div><span class="t v" style="top:747px">0.0</span><div class="o" style="top:752px"></div>

<span class="t l" style="top:768.500px">Metallic Map Influence</span>
<div class="f g" style="top:768.500px"></div><span class="t v" style="top:772.500px">1.0</span><div class="o" style="top:777.500px"></div>

<span class="t l" style="top:794px">Metallic Map</span>
<div class="f" style="top:794px;width:225px"></div><div class="q" style="left:1485px;top:794px"></div><svg style="left:1487px;top:799px" width="13" height="11"><use href="#fg"/></svg><div class="q" style="left:1504px;top:794px;width:18px"></div><svg style="left:1507px;top:799px" width="12" height="12"><use href="#sd"/></svg><div class="o" style="top:803px"></div>

<div style="left:1100px;top:818px;width:442px;height:5px;overflow:hidden"><span class="t l" style="left:5px;top:1.500px">Metallic Map Color Space</span><div class="f" style="left:157px;top:1.500px"></div></div>
</div>
</body></html>
